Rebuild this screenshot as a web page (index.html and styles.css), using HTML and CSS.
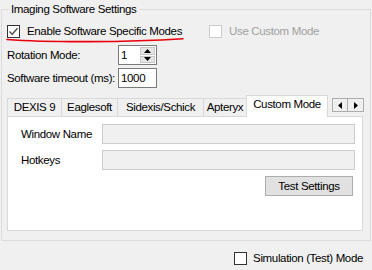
FILE: index.html
```html
<!DOCTYPE html>
<html>
<head>
<meta charset="utf-8">
<link rel="stylesheet" href="styles.css">
</head>
<body>
<div class="group">
  <span class="group-title">Imaging Software Settings</span>
  <div class="check-row">
    <label class="check">
      <span class="box checked"><svg width="11" height="11" viewBox="0 0 11 11"><path d="M1.5 5.5 L4.2 8.3 L9.5 2.2" fill="none" stroke="#4a4a4a" stroke-width="1.3"/></svg></span>
      <span class="check-text">Enable Software Specific Modes</span>
    </label>
    <label class="check disabled">
      <span class="box"></span>
      <span class="check-text">Use Custom Mode</span>
    </label>
    <svg class="annot" width="180" height="8" viewBox="0 0 180 8"><path d="M1 2.5 C 40 5.5, 120 5.5, 177 1.8" fill="none" stroke="#e8000b" stroke-width="1.6" stroke-linecap="round"/></svg>
  </div>
  <div class="fields">
    <span class="field-label">Rotation Mode:</span>
    <div class="spin">
      <span class="spin-value">1</span>
      <span class="spin-btns">
        <span class="spin-btn"><svg width="7" height="4" viewBox="0 0 7 4"><path d="M0 4 L3.5 0 L7 4Z" fill="#000"/></svg></span>
        <span class="spin-btn"><svg width="7" height="4" viewBox="0 0 7 4"><path d="M0 0 L3.5 4 L7 0Z" fill="#000"/></svg></span>
      </span>
    </div>
    <span class="field-label">Software timeout (ms):</span>
    <div class="textbox">1000</div>
  </div>
  <div class="tabctl">
    <div class="tabhead">
      <span class="tab w1">DEXIS 9</span>
      <span class="tab w2">Eaglesoft</span>
      <span class="tab w3">Sidexis/Schick</span>
      <span class="tab w4">Apteryx</span>
      <span class="tab active w5">Custom Mode</span>
      <span class="scroll">
        <span class="sbtn"><svg width="4" height="7" viewBox="0 0 4 7"><path d="M4 0 L0 3.5 L4 7Z" fill="#000"/></svg></span>
        <span class="sbtn"><svg width="4" height="7" viewBox="0 0 4 7"><path d="M0 0 L4 3.5 L0 7Z" fill="#000"/></svg></span>
      </span>
    </div>
    <div class="panel">
      <div class="prow">
        <span class="plabel">Window Name</span>
        <div class="ptext"></div>
      </div>
      <div class="prow">
        <span class="plabel">Hotkeys</span>
        <div class="ptext"></div>
      </div>
      <div class="btnrow">
        <button class="btn">Test Settings</button>
      </div>
    </div>
  </div>
</div>
<div class="footer">
  <label class="check">
    <span class="box"></span>
    <span class="check-text">Simulation (Test) Mode</span>
  </label>
</div>
</body>
</html>
```
FILE: styles.css
```css
* { box-sizing: border-box; }
html, body {
  margin: 0;
  padding: 0;
  background: #f0f0f0;
  font-family: "Liberation Sans", Arial, sans-serif;
  font-size: 11.5px;
  letter-spacing: -0.35px;
  color: #000;
}
body { width: 372px; height: 270px; overflow: hidden; }

.group {
  margin: 9px 0 0 1px;
  width: 370px;
  height: 232px;
  border: 1px solid #dcdcdc;
  position: relative;
}
.group-title {
  display: inline-block;
  margin: -8px 0 0 7px;
  padding: 0 2px;
  background: #f0f0f0;
  line-height: 14px;
  vertical-align: top;
}

.check-row {
  position: relative;
  display: flex;
  margin: 1px 0 0 5px;
  height: 16px;
  align-items: center;
}
.check {
  display: flex;
  align-items: center;
  line-height: 14px;
  white-space: nowrap;
}
.check .box {
  width: 13px;
  height: 13px;
  border: 1px solid #333;
  background: #fff;
  display: flex;
  align-items: center;
  justify-content: center;
  flex: none;
}
.check-text { margin-left: 7px; }
.check.disabled { margin-left: 27px; color: #a0a0a0; }
.check.disabled .box { border-color: #cccccc; }
.annot {
  position: absolute;
  left: -1px;
  top: 14px;
}

.fields {
  display: grid;
  grid-template-columns: 111px 39px;
  row-gap: 3px;
  margin: 6px 0 0 5px;
  align-items: center;
}
.field-label { line-height: 14px; white-space: nowrap; }
.spin {
  height: 20px;
  border: 1px solid #7a7a7a;
  background: #fff;
  display: flex;
  justify-content: space-between;
}
.spin-value { padding: 2px 0 0 2px; line-height: 14px; }
.spin-btns {
  width: 16px;
  display: flex;
  flex-direction: column;
  padding: 1px 1px 1px 0;
  gap: 1px;
}
.spin-btn {
  flex: 1;
  background: #e6e6e6;
  border: 1px solid #c8c8c8;
  display: flex;
  align-items: center;
  justify-content: center;
}
.textbox {
  height: 20px;
  border: 1px solid #7a7a7a;
  background: #fff;
  padding: 2px 0 0 2px;
  line-height: 14px;
}

.tabctl {
  margin: 7px 0 0 5px;
  width: 356px;
}
.tabhead {
  display: flex;
  align-items: flex-end;
  height: 21px;
  position: relative;
}
.tab {
  height: 18px;
  border: 1px solid #d9d9d9;
  border-bottom: none;
  border-right: none;
  background: #f0f0f0;
  line-height: 16px;
  text-align: center;
  flex: none;
  white-space: nowrap;
}
.tab.w1 { width: 54px; }
.tab.w2 { width: 56px; }
.tab.w3 { width: 86px; }
.tab.w4 { width: 43px; }
.tab.active {
  width: 82px;
  height: 22px;
  background: #fff;
  border-right: 1px solid #d9d9d9;
  margin-bottom: -1px;
  line-height: 17px;
  position: relative;
  z-index: 1;
  padding-bottom: 3px;
}
.scroll {
  display: flex;
  margin: 0 0 4px 4px;
  align-self: flex-end;
}
.sbtn {
  width: 16px;
  height: 14px;
  border: 1px solid #adadad;
  background: #f0f0f0;
  display: flex;
  align-items: center;
  justify-content: center;
}
.sbtn + .sbtn { border-left: none; }

.panel {
  height: 115px;
  background: #fff;
  border: 1px solid #d9d9d9;
  padding: 7px 0 0 13px;
}
.prow {
  display: flex;
  align-items: center;
  height: 20px;
  margin-bottom: 6px;
}
.plabel { width: 81px; line-height: 14px; }
.ptext {
  width: 253px;
  height: 20px;
  border: 1px solid #cccccc;
  background: #f0f0f0;
}
.btnrow {
  display: flex;
  justify-content: flex-end;
  margin: 3px 9px 0 0;
}
.btn {
  width: 88px;
  height: 20px;
  border: 1px solid #adadad;
  background: #e1e1e1;
  font-family: inherit;
  font-size: inherit;
  letter-spacing: inherit;
  color: #000;
  padding: 0;
  line-height: 16px;
}

.footer {
  display: flex;
  justify-content: flex-end;
  padding: 10px 9px 0 0;
}
.footer .check-text { margin-left: 6px; }
```
